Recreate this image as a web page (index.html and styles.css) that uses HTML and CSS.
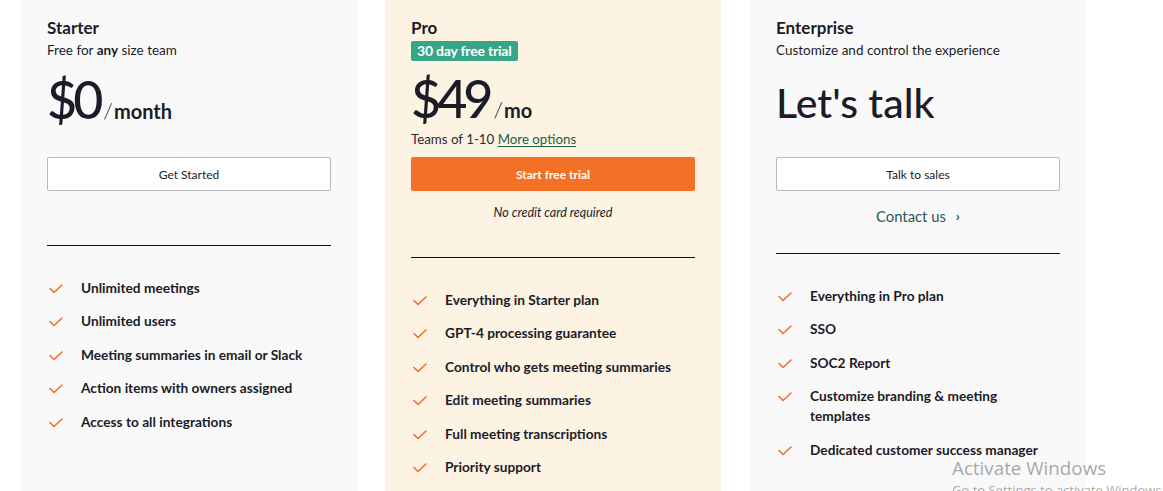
FILE: index.html
```html
<!DOCTYPE html>
<html lang="en">
<head>
<meta charset="utf-8">
<title>Pricing</title>
<link rel="stylesheet" href="styles.css">
</head>
<body>
<div class="plans">
  <section class="card card-starter">
    <div class="head">
      <h3 class="title">Starter</h3>
      <p class="sub">Free for <b>any</b> size team</p>
      <div class="price price-starter"><span class="amount">$0</span><span class="slash">/</span><span class="unit">month</span></div>
    </div>
    <button class="btn btn-outline">Get Started</button>
    <hr class="divider div-starter">
    <ul class="features">
      <li><svg class="check" viewBox="0 0 14 10"><path d="M1 4.5 L5 8.5 L13 1"/></svg><span>Unlimited meetings</span></li>
      <li><svg class="check" viewBox="0 0 14 10"><path d="M1 4.5 L5 8.5 L13 1"/></svg><span>Unlimited users</span></li>
      <li><svg class="check" viewBox="0 0 14 10"><path d="M1 4.5 L5 8.5 L13 1"/></svg><span>Meeting summaries in email or Slack</span></li>
      <li><svg class="check" viewBox="0 0 14 10"><path d="M1 4.5 L5 8.5 L13 1"/></svg><span>Action items with owners assigned</span></li>
      <li><svg class="check" viewBox="0 0 14 10"><path d="M1 4.5 L5 8.5 L13 1"/></svg><span>Access to all integrations</span></li>
    </ul>
  </section>

  <section class="card card-pro">
    <div class="head">
      <h3 class="title">Pro</h3>
      <span class="badge">30 day free trial</span>
      <div class="price price-pro"><span class="amount">$49</span><span class="slash">/</span><span class="unit">mo</span></div>
      <p class="teams">Teams of 1-10 <a href="#" class="more">More options</a></p>
    </div>
    <button class="btn btn-primary">Start free trial</button>
    <p class="note">No credit card required</p>
    <hr class="divider div-pro">
    <ul class="features">
      <li><svg class="check" viewBox="0 0 14 10"><path d="M1 4.5 L5 8.5 L13 1"/></svg><span>Everything in Starter plan</span></li>
      <li><svg class="check" viewBox="0 0 14 10"><path d="M1 4.5 L5 8.5 L13 1"/></svg><span>GPT-4 processing guarantee</span></li>
      <li><svg class="check" viewBox="0 0 14 10"><path d="M1 4.5 L5 8.5 L13 1"/></svg><span>Control who gets meeting summaries</span></li>
      <li><svg class="check" viewBox="0 0 14 10"><path d="M1 4.5 L5 8.5 L13 1"/></svg><span>Edit meeting summaries</span></li>
      <li><svg class="check" viewBox="0 0 14 10"><path d="M1 4.5 L5 8.5 L13 1"/></svg><span>Full meeting transcriptions</span></li>
      <li><svg class="check" viewBox="0 0 14 10"><path d="M1 4.5 L5 8.5 L13 1"/></svg><span>Priority support</span></li>
    </ul>
  </section>

  <section class="card card-ent">
    <div class="head">
      <h3 class="title">Enterprise</h3>
      <p class="sub">Customize and control the experience</p>
      <div class="price price-ent"><span class="talk">Let's talk</span></div>
    </div>
    <button class="btn btn-outline">Talk to sales</button>
    <a href="#" class="contact">Contact us <span class="chev">›</span></a>
    <hr class="divider div-ent">
    <ul class="features">
      <li><svg class="check" viewBox="0 0 14 10"><path d="M1 4.5 L5 8.5 L13 1"/></svg><span>Everything in Pro plan</span></li>
      <li><svg class="check" viewBox="0 0 14 10"><path d="M1 4.5 L5 8.5 L13 1"/></svg><span>SSO</span></li>
      <li><svg class="check" viewBox="0 0 14 10"><path d="M1 4.5 L5 8.5 L13 1"/></svg><span>SOC2 Report</span></li>
      <li><svg class="check" viewBox="0 0 14 10"><path d="M1 4.5 L5 8.5 L13 1"/></svg><span>Customize branding &amp; meeting templates</span></li>
      <li><svg class="check" viewBox="0 0 14 10"><path d="M1 4.5 L5 8.5 L13 1"/></svg><span>Dedicated customer success manager</span></li>
    </ul>
  </section>
</div>
<div class="watermark">
  <div class="wm-title">Activate Windows</div>
  <div class="wm-sub">Go to Settings to activate Windows.</div>
</div>
</body>
</html>
```

FILE: styles.css
```css
* { box-sizing: border-box; }
html, body { margin: 0; padding: 0; background: #ffffff; overflow: hidden; }
body {
  font-family: "Lato", "Inter", sans-serif;
  color: #1c1c28;
  height: 491px;
  position: relative;
}
.plans {
  display: flex;
  gap: 28px;
  padding-left: 20px;
  align-items: flex-start;
}
.card {
  width: 337px;
  height: 520px;
  padding: 17px 27px 0 27px;
  background: #f9f9f9;
  display: flex;
  flex-direction: column;
}
.card-pro { background: #fdf3e3; padding-left: 26px; width: 336px; }
.head { height: 140px; display: flex; flex-direction: column; align-items: flex-start; }
.title { margin: 0; font-size: 17px; line-height: 22px; font-weight: 700; }
.sub { margin: 2px 0 0 0; font-size: 13.5px; line-height: 18px; }
.sub b { font-weight: 700; }
.badge {
  margin-top: 2px;
  height: 20px;
  line-height: 20px;
  padding: 0 6px;
  background: #36a689;
  color: #fff;
  font-size: 14px;
  font-weight: 700;
  border-radius: 2px;
  letter-spacing: -0.2px;
}
.price { display: flex; align-items: baseline; line-height: 1; }
.price-starter { margin-top: 14px; }
.price-pro { margin-top: 11px; }
.price-ent { margin-top: 23px; }
.amount { font-size: 52px; font-weight: 500; letter-spacing: -4px; }
.slash { font-size: 22px; font-weight: 300; margin-left: 4px; }
.unit { font-size: 20px; font-weight: 700; margin-left: 1px; }
.talk { font-size: 41px; font-weight: 500; letter-spacing: 0; }
.teams { margin: 6px 0 0 0; font-size: 13.3px; line-height: 18px; color: #2a2a33; }
.more { color: #1d5e4c; text-decoration: underline; text-underline-offset: 2px; }
.btn {
  width: 284px;
  height: 34px;
  font-family: inherit;
  font-size: 12px;
  border-radius: 2px;
  cursor: pointer;
  padding: 0;
}
.btn-outline { background: #fff; border: 1px solid #b8b8c0; color: #1c1c28; }
.btn-primary { background: #f37026; border: none; color: #fff; font-weight: 700; }
.note { margin: 14px 0 0 0; text-align: center; width: 284px; font-size: 12.5px; line-height: 16px; font-style: italic; }
.contact {
  display: flex;
  justify-content: center;
  align-items: center;
  gap: 10px;
  width: 284px;
  margin-top: 15px;
  font-size: 14.8px;
  line-height: 20px;
  color: #1e5a58;
  text-decoration: none;
}
.chev { font-size: 14px; font-weight: 700; }
.divider { width: 284px; margin: 0; border: none; border-top: 1px solid #111; }
.div-starter { margin-top: 54px; }
.div-pro { margin-top: 36px; }
.div-ent { margin-top: 27px; }
.features {
  list-style: none;
  margin: 32px 0 0 0;
  padding: 0;
  display: flex;
  flex-direction: column;
  gap: 13.4px;
  width: 284px;
}
.features li {
  display: flex;
  align-items: flex-start;
  font-size: 13.7px;
  line-height: 20px;
  font-weight: 700;
}
.check {
  flex: none;
  width: 14px;
  height: 10px;
  margin: 6px 18px 0 2px;
  fill: none;
  stroke: #f37026;
  stroke-width: 1.6;
  stroke-linecap: round;
  stroke-linejoin: round;
}
.card-ent .features li span { max-width: 230px; }
.watermark {
  position: absolute;
  left: 952px;
  top: 456px;
  color: rgba(140, 140, 140, 0.75);
  font-family: "Open Sans", "Noto Sans", sans-serif;
  white-space: nowrap;
}
.wm-title { font-size: 18.8px; line-height: 24px; }
.wm-sub { font-size: 13px; line-height: 18px; margin-top: 1px; }
```
